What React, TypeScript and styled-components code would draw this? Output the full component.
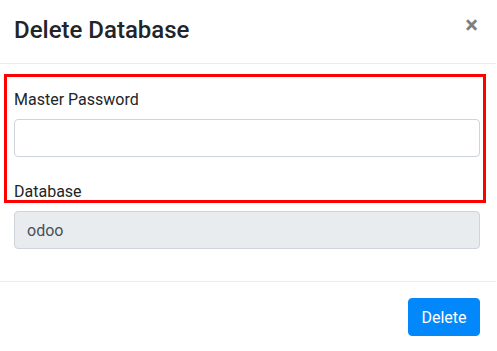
import React from 'react'
import styled, { createGlobalStyle } from 'styled-components'

const GlobalStyle = createGlobalStyle`
  html, body {
    margin: 0;
    padding: 0;
    background: #fff;
    overflow: hidden;
  }
  body {
    font-family: Roboto, 'Liberation Sans', sans-serif;
    color: #212529;
  }
`

const textColor = '#212529'
const borderColor = '#e9ecef'
const inputBorder = '#ced4da'

const Page = styled.div`
  display: flex;
  width: 497px;
  height: 351px;
  overflow: hidden;
`

const Dialog = styled.div`
  position: relative;
  flex: none;
  width: 498px;
  margin-left: -2px;
  display: flex;
  flex-direction: column;
  background: #fff;
`

// what shows of the page behind the modal backdrop
const BackdropEdge = styled.div`
  flex: none;
  width: 1px;
  margin-left: -2px;
  background: linear-gradient(
    to bottom,
    #717171 0px,
    #717171 92px,
    #5b2433 94px,
    #5b2433 160px,
    #717171 162px,
    #24497a 164px,
    #24497a 200px,
    #717171 202px,
    #717171 100%
  );
`

const Header = styled.div`
  display: flex;
  align-items: flex-start;
  justify-content: space-between;
  padding: 12px 16px 15px;
  border-bottom: 1px solid ${borderColor};
`

const Title = styled.h4`
  margin: 0;
  font-size: 24px;
  font-weight: 500;
  line-height: 36px;
  color: ${textColor};
`

const Close = styled.button`
  border: 0;
  background: transparent;
  padding: 0;
  margin: 1px 2px 0 0;
  font-family: Roboto, 'Liberation Sans', sans-serif;
  font-size: 24px;
  font-weight: 700;
  line-height: 24px;
  color: #000;
  opacity: 0.5;
  cursor: pointer;
`

const Body = styled.div`
  padding: 24px 16px 0;
  border-bottom: 1px solid ${borderColor};
`

const Field = styled.div<{ $gap: number }>`
  margin-bottom: ${(p) => p.$gap}px;
`

const Label = styled.label`
  display: block;
  font-size: 16px;
  line-height: 24px;
  margin-bottom: 7px;
  color: ${textColor};
`

const Input = styled.input`
  display: block;
  box-sizing: border-box;
  width: 100%;
  height: 38px;
  padding: 6px 12px;
  font-family: Roboto, 'Liberation Sans', sans-serif;
  font-size: 16px;
  color: #495057;
  background: ${(p) => (p.disabled ? '#e9ecef' : '#fff')};
  border: 1px solid ${inputBorder};
  border-radius: 4px;
  outline: none;
`

const Footer = styled.div`
  display: flex;
  justify-content: flex-end;
  padding: 16px;
`

const Button = styled.button`
  width: 72px;
  height: 38px;
  padding: 0;
  font-family: Roboto, 'Liberation Sans', sans-serif;
  font-size: 16px;
  color: #fff;
  background: #0388fb;
  border: 1px solid #0388fb;
  border-radius: 4px;
  cursor: pointer;
`

// red annotation frame drawn over the form
const Highlight = styled.div`
  position: absolute;
  left: 6px;
  top: 74px;
  width: 482px;
  height: 129px;
  box-sizing: border-box;
  border: 3px solid #f00;
  pointer-events: none;
`

export default function App() {
  return (
    <>
      <GlobalStyle />
      <Page>
        <Dialog>
          <Header>
            <Title>Delete Database</Title>
            <Close aria-label="Close">×</Close>
          </Header>
          <Body>
            <Field $gap={23}>
              <Label>Master Password</Label>
              <Input type="password" />
            </Field>
            <Field $gap={32}>
              <Label>Database</Label>
              <Input type="text" value="odoo" disabled readOnly />
            </Field>
          </Body>
          <Footer>
            <Button>Delete</Button>
          </Footer>
          <Highlight />
        </Dialog>
        <BackdropEdge />
      </Page>
    </>
  )
}
